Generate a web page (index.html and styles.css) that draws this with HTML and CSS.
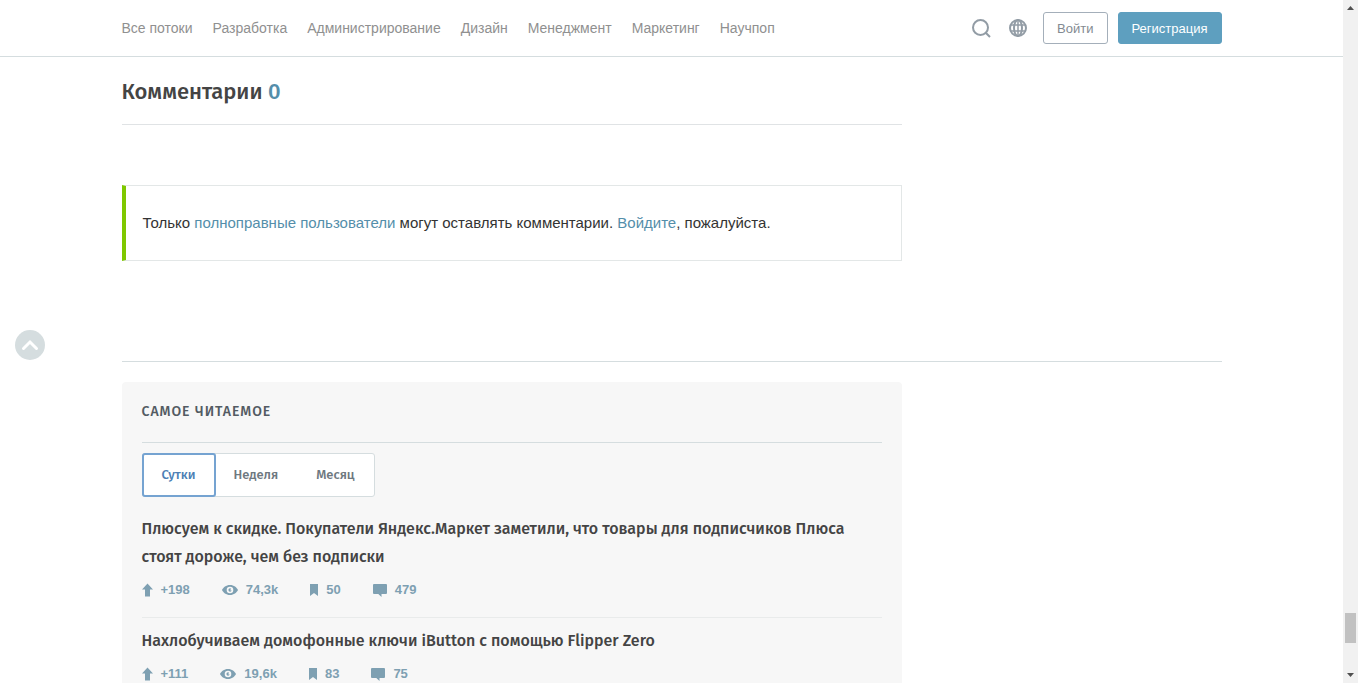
FILE: index.html
```html
<!DOCTYPE html>
<html lang="ru">
<head>
<meta charset="utf-8">
<meta name="viewport" content="width=device-width, initial-scale=1">
<title>Комментарии</title>
<link rel="stylesheet" href="styles.css">
</head>
<body>
<svg class="sprite" aria-hidden="true">
  <symbol id="arrow" viewBox="0 0 11 14"><path d="M5.500 .5 11 6.500H8V13.500H3V6.500H0z"/></symbol>
  <symbol id="eye" viewBox="0 0 16 10"><path fill-rule="evenodd" d="M8 0C4 0 1.300 2.500 0 5c1.300 2.500 4 5 8 5s6.700-2.500 8-5C14.700 2.500 12 0 8 0zm0 1.700a3.300 3.300 0 1 1 0 6.600 3.300 3.300 0 0 1 0-6.600zm0 1.600a1.700 1.700 0 1 0 1.700 2.300L8 5.300l1.200-1.500A1.700 1.700 0 0 0 8 3.300z"/></symbol>
  <symbol id="bookmark" viewBox="0 0 8 12"><path d="M0 0h8v12L4 9 0 12z"/></symbol>
  <symbol id="comment" viewBox="0 0 14 13"><path d="M1 0h12q1 0 1 1v8q0 1-1 1H8.500v3L5.300 10H1Q0 10 0 9V1Q0 0 1 0z"/></symbol>
</svg>
<div class="page">
  <header class="header">
    <div class="container header-row">
      <nav class="nav">
        <a href="#">Все потоки</a>
        <a href="#">Разработка</a>
        <a href="#">Администрирование</a>
        <a href="#">Дизайн</a>
        <a href="#">Менеджмент</a>
        <a href="#">Маркетинг</a>
        <a href="#">Научпоп</a>
      </nav>
      <div class="actions">
        <button class="icon-button" type="button" aria-label="Поиск">
          <svg width="19" height="19" viewBox="0 0 19 19" fill="none" stroke="currentColor" stroke-width="2"><circle cx="8.500" cy="8.500" r="7.500"/><path d="m13.700 13.700 4.300 4.300"/></svg>
        </button>
        <button class="icon-button" type="button" aria-label="Язык">
          <svg width="18" height="18" viewBox="0 0 18 18" fill="none" stroke="currentColor" stroke-width="2"><circle cx="9" cy="9" r="8"/><ellipse cx="9" cy="9" rx="4" ry="8"/><path d="M9 1v16M1.500 6h15M1.500 12h15" stroke-width="1.500"/></svg>
        </button>
        <a class="button" href="#">Войти</a>
        <a class="button button-primary" href="#">Регистрация</a>
      </div>
    </div>
  </header>
  <main class="container">
    <section class="column comments">
      <h2 class="comments-title">Комментарии <span class="count">0</span></h2>
      <p class="notice">Только <a href="#">полноправные пользователи</a> могут оставлять комментарии. <a href="#">Войдите</a>, пожалуйста.</p>
    </section>
    <hr class="divider">
    <section class="column card">
      <h3 class="card-title">Самое читаемое</h3>
      <div class="tabs">
        <button class="tab tab-active" type="button">Сутки</button>
        <button class="tab" type="button">Неделя</button>
        <button class="tab" type="button">Месяц</button>
      </div>
      <article class="post">
        <a class="post-title" href="#">Плюсуем к скидке. Покупатели Яндекс.Маркет заметили, что товары для подписчиков Плюса стоят дороже, чем без подписки</a>
        <div class="stats">
          <span class="stat"><svg width="11" height="14"><use href="#arrow"/></svg>+198</span>
          <span class="stat"><svg width="16" height="10"><use href="#eye"/></svg>74,3k</span>
          <span class="stat"><svg width="8" height="12"><use href="#bookmark"/></svg>50</span>
          <span class="stat"><svg width="14" height="13"><use href="#comment"/></svg>479</span>
        </div>
      </article>
      <article class="post">
        <a class="post-title" href="#">Нахлобучиваем домофонные ключи iButton с помощью Flipper Zero</a>
        <div class="stats">
          <span class="stat"><svg width="11" height="14"><use href="#arrow"/></svg>+111</span>
          <span class="stat"><svg width="16" height="10"><use href="#eye"/></svg>19,6k</span>
          <span class="stat"><svg width="8" height="12"><use href="#bookmark"/></svg>83</span>
          <span class="stat"><svg width="14" height="13"><use href="#comment"/></svg>75</span>
        </div>
      </article>
    </section>
  </main>
</div>
<button class="to-top" type="button" aria-label="Наверх">
  <svg width="18" height="12" viewBox="0 0 18 12" fill="none" stroke="currentColor" stroke-width="3" stroke-linecap="round"><path d="m2.500 9.500 6.500-6.500 6.500 6.500"/></svg>
</button>
<div class="scrollbar" aria-hidden="true">
  <svg width="7" height="4" viewBox="0 0 7 4"><path d="M3.500 0 7 4H0z"/></svg>
  <div class="track"><div class="thumb"></div></div>
  <svg width="7" height="4" viewBox="0 0 7 4"><path d="M0 0h7L3.500 4z"/></svg>
</div>
</body>
</html>
```
FILE: styles.css
```css
* { box-sizing: border-box; }

:root {
  --text-font: Arial, "Liberation Sans", sans-serif;
  --title-font: "Fira Sans", "Noto Sans", sans-serif;
}

body {
  margin: 0;
  display: flex;
  height: 100vh;
  overflow: hidden;
  background: #fff;
  color: #333;
  font: 15px/24px var(--text-font);
}

a { color: #548eaa; text-decoration: none; }
button { font: inherit; cursor: pointer; }
.sprite { display: none; }

.page { flex: 1; min-width: 0; overflow: hidden; }
.container { max-width: 1140px; margin: 0 auto; padding: 0 20px; }
.column { max-width: 780px; }

.header { border-bottom: 1px solid #d5dddf; }
.header-row { display: flex; align-items: center; justify-content: space-between; height: 56px; }
.nav { display: flex; gap: 20px; font-size: 14px; }
.nav a { color: #909090; }
.actions { display: flex; align-items: center; }
.icon-button {
  display: flex;
  margin-right: 16px;
  padding: 0;
  border: 0;
  background: none;
  color: #929ca5;
}
.icon-button + .icon-button { margin-left: 2px; }
.button {
  padding: 1px 13px 0;
  border: 1px solid #a4afba;
  border-radius: 3px;
  color: #838a92;
  font-size: 13px;
  line-height: 29px;
}
.button-primary {
  margin-left: 10px;
  border-color: #5e9fbf;
  background: #5e9fbf;
  color: #fff;
}

.comments { padding-top: 19px; }
.comments-title {
  margin: 0 0 60px;
  padding-bottom: 16px;
  border-bottom: 1px solid #e0e3e5;
  color: #444;
  font: 500 22px/32px var(--title-font);
}
.count { color: #548eaa; }
.notice {
  margin: 0;
  padding: 25px 17px;
  border: 1px solid #e3e7e7;
  border-left: 4px solid #7fc800;
}

.divider { margin: 100px 0 20px; border: 0; border-top: 1px solid #d5dddf; }

.card { padding: 18px 20px 20px; border-radius: 4px; background: #f7f7f7; }
.card-title {
  margin: 0 0 10px;
  padding-bottom: 18px;
  border-bottom: 1px solid #d5dddf;
  color: #535b63;
  font: 500 14px/24px var(--title-font);
  letter-spacing: 1px;
  text-transform: uppercase;
}
.tabs {
  display: flex;
  width: fit-content;
  margin-bottom: 18px;
  border: 1px solid #d5dddf;
  border-radius: 3px;
  background: #fff;
}
.tab {
  height: 42px;
  padding: 0 19px;
  border: 0;
  background: none;
  color: #6e7880;
  font: 500 13px/20px var(--title-font);
}
.tab-active {
  height: 44px;
  margin: -1px;
  padding: 0 18px;
  border: 2px solid #75a3d1;
  border-radius: 3px;
  color: #4d7fb5;
}

.post + .post { margin-top: 16px; padding-top: 9px; border-top: 1px solid #e9ebeb; }
.post-title { display: block; color: #444; font: 500 16px/28px var(--title-font); }
.stats {
  display: flex;
  gap: 32px;
  margin-top: 8px;
  color: #7ea0b2;
  font-size: 13px;
  font-weight: 700;
  line-height: 22px;
}
.stat { display: flex; align-items: center; gap: 8px; }
.stat svg { fill: currentColor; }

.to-top {
  position: fixed;
  top: 50%;
  left: 15px;
  display: grid;
  place-items: center;
  width: 30px;
  height: 30px;
  margin-top: -12px;
  padding: 0;
  border: 0;
  border-radius: 50%;
  background: #d5dddf;
  color: #fff;
}

.scrollbar {
  display: flex;
  flex-direction: column;
  align-items: center;
  width: 15px;
  padding: 6px 0;
  background: #f1f1f1;
}
.scrollbar svg { fill: #505050; }
.track { display: flex; flex: 1; flex-direction: column; justify-content: flex-end; padding-bottom: 30px; }
.thumb { width: 11px; height: 30px; background: #c1c1c1; }
```
